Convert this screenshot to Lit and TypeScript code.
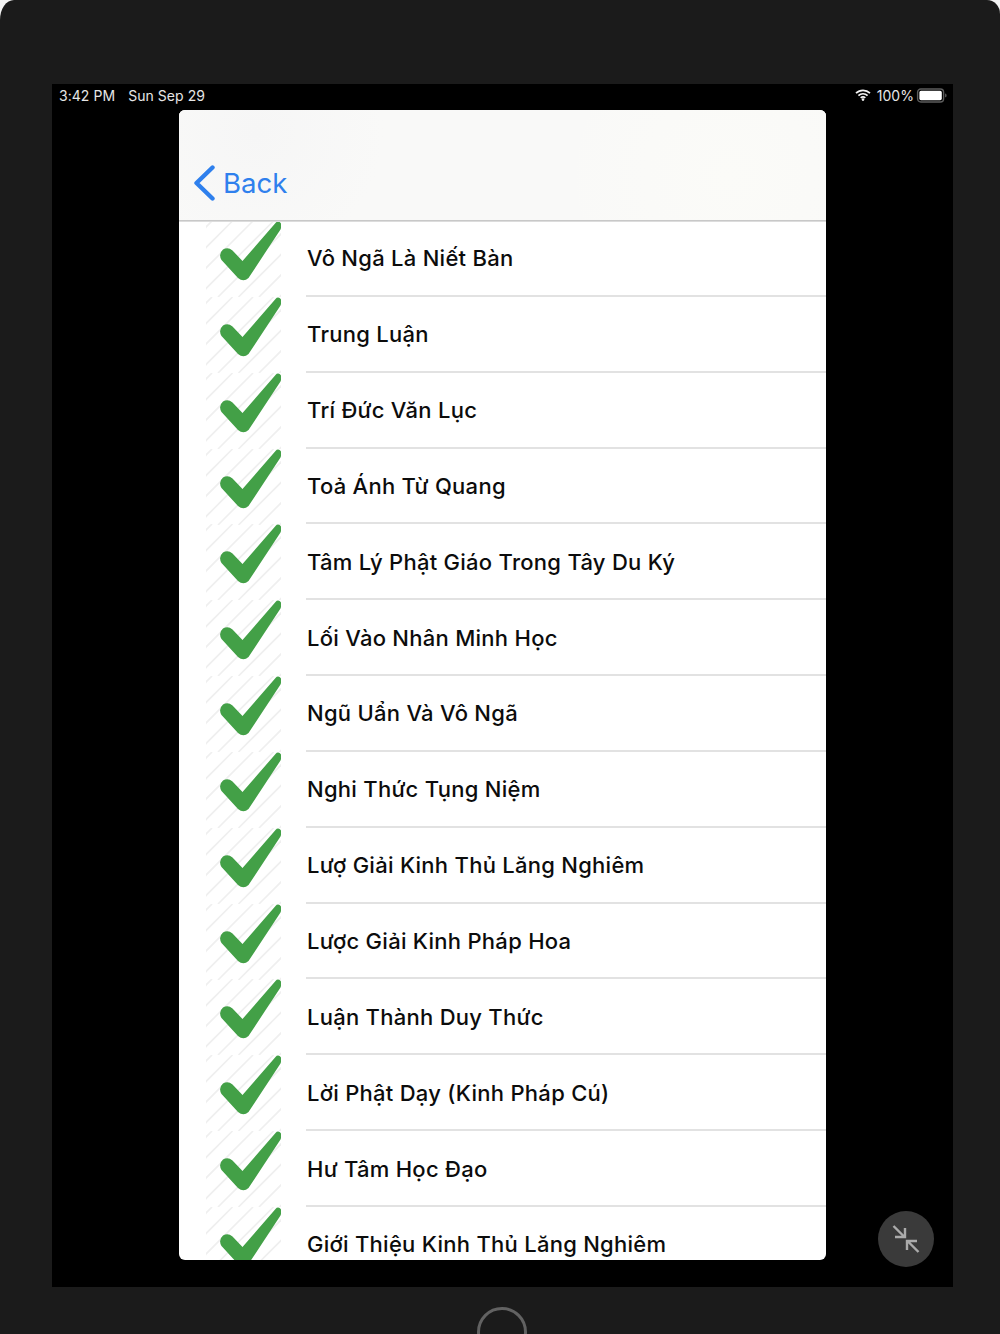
import { LitElement, html, css, svg } from "lit";
import { customElement } from "lit/decorators.js";

const TITLES = [
  "Vô Ngã Là Niết Bàn",
  "Trung Luận",
  "Trí Đức Văn Lục",
  "Toả Ánh Từ Quang",
  "Tâm Lý Phật Giáo Trong Tây Du Ký",
  "Lối Vào Nhân Minh Học",
  "Ngũ Uẩn Và Vô Ngã",
  "Nghi Thức Tụng Niệm",
  "Lượ Giải Kinh Thủ Lăng Nghiêm",
  "Lược Giải Kinh Pháp Hoa",
  "Luận Thành Duy Thức",
  "Lời Phật Dạy (Kinh Pháp Cú)",
  "Hư Tâm Học Đạo",
  "Giới Thiệu Kinh Thủ Lăng Nghiêm",
];

const hatch = [] as ReturnType<typeof svg>[];
for (let c = -70; c < 150; c += 20.5) {
  hatch.push(svg`<line x1=${c} y1="76" x2=${c + 76} y2="0"></line>`);
}

@customElement("app-root")
export class AppRoot extends LitElement {
  static styles = css`
    :host {
      display: block;
      width: 1000px;
      height: 1334px;
      overflow: hidden;
      background: #f4f4f4;
      font-family: Inter, "Noto Sans", sans-serif;
    }
    .device {
      position: relative;
      height: 1334px;
      box-sizing: border-box;
      padding: 84px 47px 0 52px;
      background: #1b1b1b;
      border-radius: 14px 13px 0 0 / 20px 14px 0 0;
      overflow: hidden;
    }
    .screen {
      position: relative;
      height: 1203px;
      background: #000;
      display: flex;
      flex-direction: column;
      align-items: center;
    }
    .status {
      align-self: stretch;
      height: 26px;
      box-sizing: border-box;
      padding: 0 6px 4px 7px;
      display: flex;
      align-items: center;
      justify-content: space-between;
      color: #e6e6e6;
      font-size: 14px;
      letter-spacing: 0.05px;
    }
    .left { display: flex; gap: 13px; }
    .right { display: flex; align-items: center; gap: 2px; }
    .wifi { margin-right: 4px; }
    .card {
      width: 647px;
      height: 1150px;
      background: #fff;
      border-radius: 6px;
      overflow: hidden;
      display: flex;
      flex-direction: column;
    }
    .nav {
      position: relative;
      z-index: 1;
      flex: 0 0 111px;
      box-sizing: border-box;
      background:
        radial-gradient(circle at 12% 20%, #f6f6f6 0, transparent 22%),
        radial-gradient(circle at 85% 60%, #fbfbf8 0, transparent 30%),
        #f9f9f8;
      border-bottom: 1px solid #c8c8c8;
      box-shadow: 0 1px 0 #dcdcdc;
      display: flex;
      align-items: flex-end;
      padding: 0 0 19px 14px;
      gap: 8px;
      color: #2f80ed;
      font-size: 27.6px;
      line-height: 36px;
    }
    .nav svg { display: block; }
    .list { flex: 1; overflow: hidden; }
    .row {
      height: 75.85px;
      display: flex;
      align-items: stretch;
    }
    .thumb { width: 75px; height: 76px; margin-left: 27px; flex: none; }
    .thumb line { stroke: #efefef; stroke-width: 1.6; }
    .label {
      flex: 1;
      margin-left: 25px;
      box-sizing: border-box;
      border-bottom: 2px solid #e2e2e2;
      display: flex;
      align-items: center;
      padding: 1px 0 0 1px;
      color: #0c0c0c;
      font-size: 22px;
      font-weight: 500;
      letter-spacing: 0.27px;
      white-space: nowrap;
    }
    .float {
      position: absolute;
      left: 826px;
      top: 1127px;
      width: 56px;
      height: 56px;
      border-radius: 50%;
      background: #3a3a3a;
      display: flex;
      align-items: center;
      justify-content: center;
    }
    .home {
      position: absolute;
      left: 477px;
      top: 1307px;
      width: 50px;
      height: 50px;
      box-sizing: border-box;
      border: 3px solid #626262;
      border-radius: 50%;
    }
  `;

  render() {
    return html`
      <div class="device">
        <div class="screen">
          <div class="status">
            <div class="left"><span>3:42 PM</span><span>Sun Sep 29</span></div>
            <div class="right">
              <svg class="wifi" width="16" height="12" viewBox="0 0 16 12">
                <path d="M1 4.2a10 10 0 0 1 14 0M3.4 6.6a6.6 6.6 0 0 1 9.2 0M5.7 8.9a3.3 3.3 0 0 1 4.6 0" fill="none" stroke="#f2f2f2" stroke-width="1.7"></path>
                <circle cx="8" cy="10.6" r="1.3" fill="#f2f2f2"></circle>
              </svg>
              <span>100%</span>
              <svg width="31" height="15" viewBox="0 0 31 15">
                <rect x="1.6" y="1" width="26" height="13" rx="3.2" fill="none" stroke="#5c5c5c" stroke-width="1.4"></rect>
                <rect x="3.4" y="2.8" width="22.4" height="9.4" rx="1.6" fill="#fff"></rect>
                <path d="M29.2 5.6c.9.3 1.3 1 1.3 1.9s-.4 1.6-1.3 1.9z" fill="#666"></path>
              </svg>
            </div>
          </div>
          <div class="card">
            <div class="nav">
              <svg width="22" height="36" viewBox="0 0 22 36">
                <path d="M19.5 2.5 3.5 18 19.5 33.5" fill="none" stroke="#2f80ed" stroke-width="4.4" stroke-linecap="round" stroke-linejoin="round"></path>
              </svg>
              <span>Back</span>
            </div>
            <div class="list">
              ${TITLES.map(
                (t) => html`
                  <div class="row">
                    <svg class="thumb" viewBox="0 0 75 76">
                      ${hatch}
                      <path d="M69.5 2 36.5 40 26.5 29.5Q22 25.5 17 28.5Q12 33 15.5 39L32 57Q37.5 61.5 42.5 57L74.5 8.5Q76.5 3.5 74 1.2Q71.5 -.5 69.5 2Z" fill="#43a047"></path>
                    </svg>
                    <div class="label">${t}</div>
                  </div>
                `
              )}
            </div>
          </div>
          <div class="float">
            <svg width="28" height="28" viewBox="0 0 28 28" fill="none" stroke="#ababab" stroke-width="2.4">
              <path d="M1.5 1 12.5 12M3 12H13V3"></path>
              <path d="M26.5 27 15.5 16M25 16H15V25"></path>
            </svg>
          </div>
        </div>
        <div class="home"></div>
      </div>
    `;
  }
}
